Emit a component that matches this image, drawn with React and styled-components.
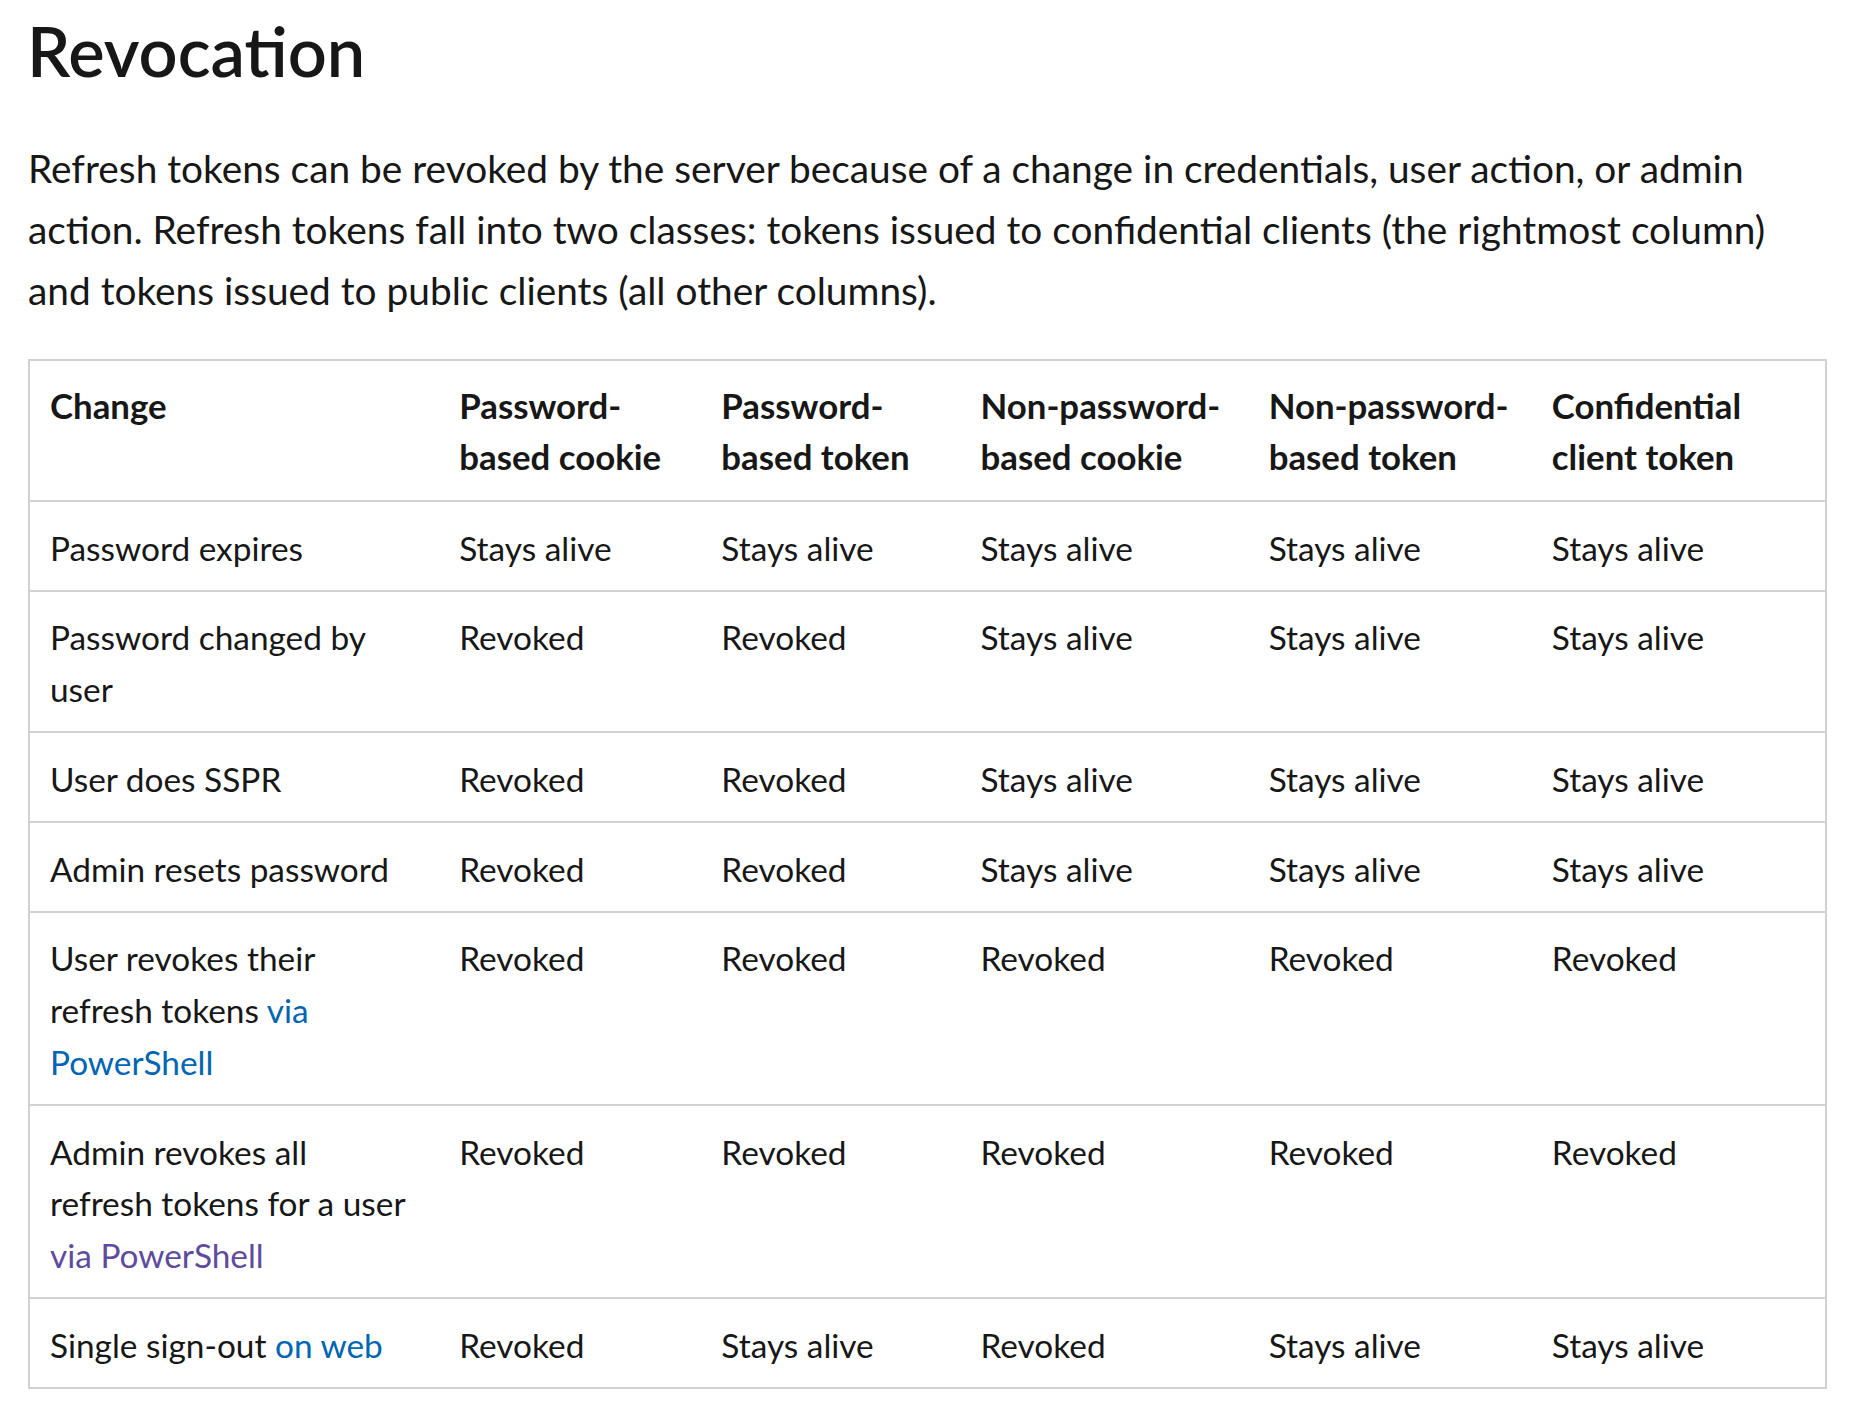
import React from "react";
import styled, { createGlobalStyle } from "styled-components";

const GlobalStyle = createGlobalStyle`
  body {
    margin: 0;
    background: #ffffff;
    color: #171717;
    font-family: Lato, "Open Sans", "Liberation Sans", sans-serif;
  }
`;

const columns = [
  { title: "Change", width: 410 },
  { title: "Password-based cookie", width: 262 },
  { title: "Password-based token", width: 259 },
  { title: "Non-password-based cookie", width: 288 },
  { title: "Non-password-based token", width: 283 },
  { title: "Confidential client token", width: 294 },
];

const A = "Stays alive";
const R = "Revoked";

const rows = [
  { change: ["Password expires"], values: [A, A, A, A, A] },
  { change: ["Password changed by user"], values: [R, R, A, A, A] },
  { change: ["User does SSPR"], values: [R, R, A, A, A] },
  { change: ["Admin resets password"], values: [R, R, A, A, A] },
  {
    change: ["User revokes their refresh tokens ", { link: "via PowerShell" }],
    values: [R, R, R, R, R],
  },
  {
    change: ["Admin revokes all refresh tokens for a user ", { link: "via PowerShell", visited: true }],
    values: [R, R, R, R, R],
  },
  { change: ["Single sign-out ", { link: "on web" }], values: [R, A, R, A, A] },
];

function App() {
  return (
    <Page>
      <GlobalStyle />
      <Title>Revocation</Title>
      <Intro>
        Refresh tokens can be revoked by the server because of a change in credentials, user action, or admin
        action. Refresh tokens fall into two classes: tokens issued to confidential clients (the rightmost column)
        and tokens issued to public clients (all other columns).
      </Intro>
      <Table>
        <colgroup>
          {columns.map((c) => (
            <col key={c.title} style={{ width: c.width }} />
          ))}
        </colgroup>
        <thead>
          <tr>
            {columns.map((c) => (
              <HeadCell key={c.title}>{c.title}</HeadCell>
            ))}
          </tr>
        </thead>
        <tbody>
          {rows.map((row, i) => (
            <tr key={i}>
              <Cell>
                {row.change.map((part, j) =>
                  typeof part === "string" ? (
                    part
                  ) : (
                    <Link key={j} href="#" $visited={part.visited}>
                      {part.link}
                    </Link>
                  )
                )}
              </Cell>
              {row.values.map((v, j) => (
                <Cell key={j}>{v}</Cell>
              ))}
            </tr>
          ))}
        </tbody>
      </Table>
    </Page>
  );
}

export default App;

const Page = styled.main`
  padding: 11px 25px 40px 28px;
`;

const Title = styled.h1`
  margin: 0 0 0 -1px;
  font-size: 68.5px;
  line-height: 80px;
  font-weight: 600;
  color: #171717;
`;

const Intro = styled.p`
  margin: 46.5px 0 0;
  font-size: 38.85px;
  line-height: 61px;
`;

const Table = styled.table`
  width: 100%;
  margin-top: 38px;
  table-layout: fixed;
  border-collapse: collapse;
  border: 2px solid #d1d1d1;
`;

const HeadCell = styled.th`
  padding: 19px 20px 17px;
  text-align: left;
  vertical-align: top;
  font-size: 34.8px;
  line-height: 51.75px;
  font-weight: 700;
  color: #171717;
  &:first-child {
    padding-right: 26px;
  }
`;

const Cell = styled.td`
  padding: 20.5px 20px 15.5px;
  vertical-align: top;
  font-size: 33.4px;
  line-height: 51.75px;
  border-top: 2px solid #d1d1d1;
  &:first-child {
    padding-right: 26px;
  }
`;

const Link = styled.a`
  color: ${(p) => (p.$visited ? "#5e4b9e" : "#0065b3")};
  text-decoration: none;
`;
